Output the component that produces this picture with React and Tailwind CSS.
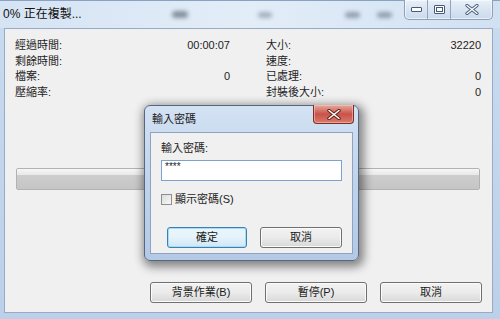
import React from "react";

const font = { fontFamily: '"Liberation Sans", "Noto Sans CJK TC", sans-serif' };

function WinButton({ children, className = "", focused = false }) {
  return (
    <div
      className={
        "flex items-center justify-center rounded-[3px] border text-[11px] text-[#1a1a1a] " +
        (focused
          ? "border-[#3c7fb1] shadow-[inset_0_0_0_1px_#a6dcf5] bg-gradient-to-b from-[#eaf6fd] via-[#e4f2fb] to-[#cfe7f6] "
          : "border-[#707070] shadow-[inset_0_0_0_1px_#fbfbfb] bg-gradient-to-b from-[#f2f2f2] via-[#ebebeb] to-[#d8d8d8] ") +
        className
      }
    >
      {children}
    </div>
  );
}

function Row({ label, value }) {
  return (
    <div className="flex h-[15.5px] items-center justify-between leading-none">
      <span>{label}</span>
      <span className="pr-[1px]">{value}</span>
    </div>
  );
}

export default function App() {
  return (
    <div
      className="relative flex h-[319px] w-[500px] flex-col overflow-hidden bg-gradient-to-b from-[#c9dbf0] to-[#bcd0ea] text-[11px] text-[#1e1e1e]"
      style={font}
    >
      {/* Title bar */}
      <div className="relative flex h-[28px] shrink-0 items-center border-t border-[#8aa2c2] bg-gradient-to-r from-[#d5e3f3] via-[#e3edf8] to-[#d1e1f2] pl-[3px]">
        <span className="relative -mt-[2px] text-[12px] text-[#111]">0% 正在複製...</span>
        <span className="absolute left-[172px] top-[10px] h-[7px] w-[16px] rounded-full bg-[#5e6a78] opacity-70 blur-[2px]" />
        <span className="absolute left-[258px] top-[11px] h-[6px] w-[14px] rounded-full bg-[#7a8898] opacity-60 blur-[2px]" />
        <span className="absolute left-[345px] top-[11px] h-[6px] w-[15px] rounded-full bg-[#6a7888] opacity-65 blur-[2px]" />
        <span className="absolute left-[377px] top-[11px] h-[6px] w-[15px] rounded-full bg-[#6a7888] opacity-65 blur-[2px]" />
        {/* window controls */}
        <div className="absolute right-[7px] top-[-1px] flex h-[20px] overflow-hidden rounded-b-[5px] border border-t-0 border-[#8e9fb6] bg-gradient-to-b from-[#e8f0f9] to-[#cad9ec] shadow-[inset_0_0_0_1px_rgba(255,255,255,0.6)]">
          <div className="flex w-[23px] items-center justify-center border-r border-[#95a6bc]">
            <svg width="11" height="6" viewBox="0 0 11 6">
              <rect x="0.5" y="0.5" width="10" height="4" rx="0.5" fill="#fff" stroke="#465a78" />
            </svg>
          </div>
          <div className="flex w-[23px] items-center justify-center border-r border-[#95a6bc]">
            <svg width="11" height="9" viewBox="0 0 11 9">
              <rect x="0.5" y="0.5" width="10" height="8" rx="0.5" fill="#fff" stroke="#465a78" />
              <rect x="2.5" y="2.5" width="6" height="4" fill="#fff" stroke="#465a78" />
            </svg>
          </div>
          <div className="flex w-[41px] items-center justify-center">
            <svg width="14" height="11" viewBox="0 0 14 11">
              <path d="M2 1.5 L12 9.5 M12 1.5 L2 9.5" stroke="#465a78" strokeWidth="3.2" strokeLinecap="round" />
              <path d="M2 1.5 L12 9.5 M12 1.5 L2 9.5" stroke="#fff" strokeWidth="1.4" strokeLinecap="round" />
            </svg>
          </div>
        </div>
      </div>

      {/* Client area */}
      <div className="mb-[6px] ml-[4px] mr-[7px] flex flex-1 flex-col border border-[#97abc6] bg-[#f0f0f0] pt-[9px]">
        <div className="grid grid-cols-2 gap-x-[35px] px-[10px]">
          <div className="flex flex-col">
            <Row label="經過時間:" value="00:00:07" />
            <Row label="剩餘時間:" value="" />
            <Row label="檔案:" value="0" />
            <Row label="壓縮率:" value="" />
          </div>
          <div className="flex flex-col">
            <Row label="大小:" value="32220" />
            <Row label="速度:" value="" />
            <Row label="已處理:" value="0" />
            <Row label="封裝後大小:" value="0" />
          </div>
        </div>

        {/* progress bar */}
        <div className="ml-[11px] mr-[12px] mt-[68px] flex h-[22px] flex-col overflow-hidden rounded-[2px] border border-[#b2b2b2]">
          <div className="h-[6px] bg-gradient-to-b from-[#f6f6f6] to-[#e8e8e8]" />
          <div className="flex-1 bg-gradient-to-b from-[#cdcdcd] to-[#c5c5c5]" />
        </div>

        <div className="mt-auto flex justify-end gap-[13px] pb-[9px] pr-[10px]">
          <WinButton className="h-[21px] w-[102px]">背景作業(B)</WinButton>
          <WinButton className="h-[21px] w-[102px]">暫停(P)</WinButton>
          <WinButton className="h-[21px] w-[102px]">取消</WinButton>
        </div>
      </div>

      {/* Password dialog */}
      <div className="absolute left-[144px] top-[105px] flex h-[156px] w-[215px] flex-col rounded-[6px] border border-[#56687f] bg-gradient-to-b from-[#d3e2f3] via-[#bfd3ec] to-[#b3c9e6] shadow-[2px_3px_10px_3px_rgba(0,0,0,0.45)]">
        <div className="relative flex h-[26px] shrink-0 items-center pl-[7px]">
          <span className="text-[11px] text-[#1a1a1a]">輸入密碼</span>
          <div className="absolute right-[4px] top-[-1px] flex h-[19px] w-[41px] items-center justify-center rounded-b-[4px] border border-t-0 border-[#7b2f2a] bg-gradient-to-b from-[#e6a99e] via-[#c9524a] to-[#d87a6a] shadow-[inset_0_0_0_1px_rgba(255,210,200,0.5)]">
            <svg width="14" height="11" viewBox="0 0 14 11">
              <path d="M2 1.5 L12 9.5 M12 1.5 L2 9.5" stroke="#5a1d18" strokeWidth="3.4" strokeLinecap="round" />
              <path d="M2 1.5 L12 9.5 M12 1.5 L2 9.5" stroke="#fff" strokeWidth="1.6" strokeLinecap="round" />
            </svg>
          </div>
        </div>
        <div className="mx-[5px] mb-[6px] flex flex-1 flex-col border border-[#8da3c0] bg-[#f0f0f0] px-[10px] pt-[8px]">
          <div className="h-[14px] leading-[14px]">輸入密碼:</div>
          <div className="mt-[5px] flex h-[21px] items-start border border-[#7da2ce] bg-white pl-[3px] pr-[10px] text-[10px] leading-[12px]">
            ****
          </div>
          <div className="mt-[10px] flex items-center gap-[3px]">
            <div className="h-[11px] w-[11px] border border-[#8f8f8f] bg-gradient-to-br from-[#dcdcdc] to-[#f8f8f8]" />
            <span>顯示密碼(S)</span>
          </div>
          <div className="mt-[19px] flex gap-[13px] pl-[6px]">
            <WinButton focused className="h-[21px] w-[80px]">確定</WinButton>
            <WinButton className="h-[21px] w-[82px]">取消</WinButton>
          </div>
        </div>
      </div>
    </div>
  );
}
